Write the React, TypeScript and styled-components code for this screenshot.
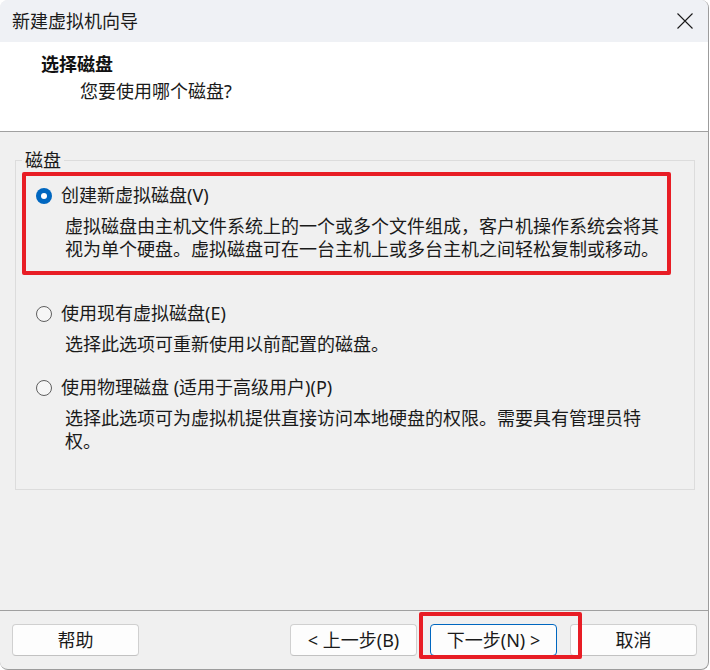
import React from "react";
import styled, { createGlobalStyle, css } from "styled-components";

const Global = createGlobalStyle`
  html, body { margin: 0; padding: 0; background: #ffffff; }
  body { font-family: "Noto Sans", "Noto Sans CJK SC", sans-serif; }
  *, *::before, *::after { box-sizing: border-box; }
`;

const FONT = `"Noto Sans", "Noto Sans CJK SC", sans-serif`;

const Window = styled.div`
  width: 709px;
  height: 670px;
  display: flex;
  flex-direction: column;
  background: #f0f0f0;
  border-right: 1px solid #9c9c9c;
  border-bottom: 1px solid #9c9c9c;
  border-radius: 8px;
  overflow: hidden;
  color: #1a1a1a;
  font-family: ${FONT};
`;

const TitleBar = styled.div`
  flex: none;
  height: 42px;
  display: flex;
  align-items: center;
  justify-content: space-between;
  padding: 0 15px 0 12px;
  background: #eff1f5;
`;

const TitleText = styled.span`
  font-size: 18px;
  line-height: 23px;
  color: #1a1a1a;
`;

const CloseIcon = styled.svg`
  display: block;
  width: 16px;
  height: 16px;
`;

const Header = styled.div`
  flex: none;
  height: 90px;
  background: #ffffff;
  border-bottom: 1px solid #a0a0a0;
  padding: 11px 0 0 41px;
`;

const HeaderTitle = styled.div`
  font-size: 18px;
  line-height: 23px;
  font-weight: 700;
  color: #111;
`;

const HeaderSubtitle = styled.div`
  margin-top: 4px;
  padding-left: 39px;
  font-size: 18px;
  line-height: 23px;
`;

const Body = styled.div`
  flex: 1;
  padding: 17px 13px 0 15px;
`;

const GroupBox = styled.fieldset`
  margin: 0;
  padding: 0;
  min-width: 0;
  border: 1px solid #dcdcdc;
`;

const GroupLegend = styled.legend`
  margin-left: 6px;
  padding: 0 3px;
  font-size: 18px;
  line-height: 23px;
  color: #1a1a1a;
`;

const Options = styled.div`
  display: flex;
  flex-direction: column;
  padding: 12px 23px 36px 20px;
`;

const Option = styled.div<{ $spaceAfter?: number; $highlight?: boolean }>`
  position: relative;
  display: flex;
  flex-direction: column;
  margin-bottom: ${(p) => p.$spaceAfter ?? 0}px;
  ${(p) =>
    p.$highlight &&
    css`
      &::after {
        content: "";
        position: absolute;
        top: -12px;
        left: -14px;
        right: 0;
        bottom: -14px;
        border: 4px solid #e81d25;
        border-radius: 2px;
        pointer-events: none;
      }
    `}
`;

const OptionLabel = styled.label`
  display: flex;
  align-items: center;
  gap: 9px;
  height: 23px;
  font-size: 18px;
  line-height: 23px;
  color: #1a1a1a;
`;

const Radio = styled.span<{ $checked?: boolean }>`
  position: relative;
  flex: none;
  width: 16px;
  height: 16px;
  border-radius: 50%;
  ${(p) =>
    p.$checked
      ? css`
          background: #0067c0;
          &::after {
            content: "";
            position: absolute;
            left: 5px;
            top: 5px;
            width: 6px;
            height: 6px;
            border-radius: 50%;
            background: #ffffff;
          }
        `
      : css`
          background: #f6f6f6;
          border: 1px solid #5f5f5f;
        `}
`;

const OptionDesc = styled.div`
  margin-top: 8px;
  padding-left: 29px;
  font-size: 18px;
  line-height: 23px;
  color: #1a1a1a;
`;

const Footer = styled.div`
  flex: none;
  height: 59px;
  border-top: 1px solid #a0a0a0;
  padding: 13px 11px 0 12px;
  display: flex;
  align-items: flex-start;
  justify-content: space-between;
`;

const ButtonGroup = styled.div`
  display: flex;
  gap: 13px;
`;

const Annotated = styled.div`
  position: relative;
  &::after {
    content: "";
    position: absolute;
    top: -12px;
    left: -11px;
    right: -25px;
    bottom: -3px;
    border: 4px solid #e81d25;
    border-radius: 2px;
    pointer-events: none;
  }
`;

const DialogButton = styled.button<{ $default?: boolean }>`
  display: block;
  width: 127px;
  height: 32px;
  padding: 0;
  background: #fdfdfd;
  border: 1px solid ${(p) => (p.$default ? "#0067c0" : "#d0d0d0")};
  border-bottom-color: ${(p) => (p.$default ? "#0067c0" : "#c2c2c2")};
  border-radius: 4px;
  font-family: ${FONT};
  font-size: 18px;
  line-height: 23px;
  color: #1a1a1a;
  text-align: center;
`;

export default function App() {
  return (
    <>
      <Global />
      <Window>
        <TitleBar>
          <TitleText>新建虚拟机向导</TitleText>
          <CloseIcon viewBox="0 0 16 16">
            <path d="M0.5 0.5 L15.5 15.5 M15.5 0.5 L0.5 15.5" stroke="#1a1a1a" strokeWidth="1.1" fill="none" />
          </CloseIcon>
        </TitleBar>
        <Header>
          <HeaderTitle>选择磁盘</HeaderTitle>
          <HeaderSubtitle>您要使用哪个磁盘?</HeaderSubtitle>
        </Header>
        <Body>
          <GroupBox>
            <GroupLegend>磁盘</GroupLegend>
            <Options>
              <Option $spaceAfter={41} $highlight>
                <OptionLabel>
                  <Radio $checked />
                  创建新虚拟磁盘(V)
                </OptionLabel>
                <OptionDesc>
                  虚拟磁盘由主机文件系统上的一个或多个文件组成，客户机操作系统会将其视为单个硬盘。虚拟磁盘可在一台主机上或多台主机之间轻松复制或移动。
                </OptionDesc>
              </Option>
              <Option $spaceAfter={20}>
                <OptionLabel>
                  <Radio />
                  使用现有虚拟磁盘(E)
                </OptionLabel>
                <OptionDesc>选择此选项可重新使用以前配置的磁盘。</OptionDesc>
              </Option>
              <Option>
                <OptionLabel>
                  <Radio />
                  使用物理磁盘 (适用于高级用户)(P)
                </OptionLabel>
                <OptionDesc>
                  选择此选项可为虚拟机提供直接访问本地硬盘的权限。需要具有管理员特权。
                </OptionDesc>
              </Option>
            </Options>
          </GroupBox>
        </Body>
        <Footer>
          <DialogButton>帮助</DialogButton>
          <ButtonGroup>
            <DialogButton>&lt; 上一步(B)</DialogButton>
            <Annotated>
              <DialogButton $default>下一步(N) &gt;</DialogButton>
            </Annotated>
            <DialogButton>取消</DialogButton>
          </ButtonGroup>
        </Footer>
      </Window>
    </>
  );
}
